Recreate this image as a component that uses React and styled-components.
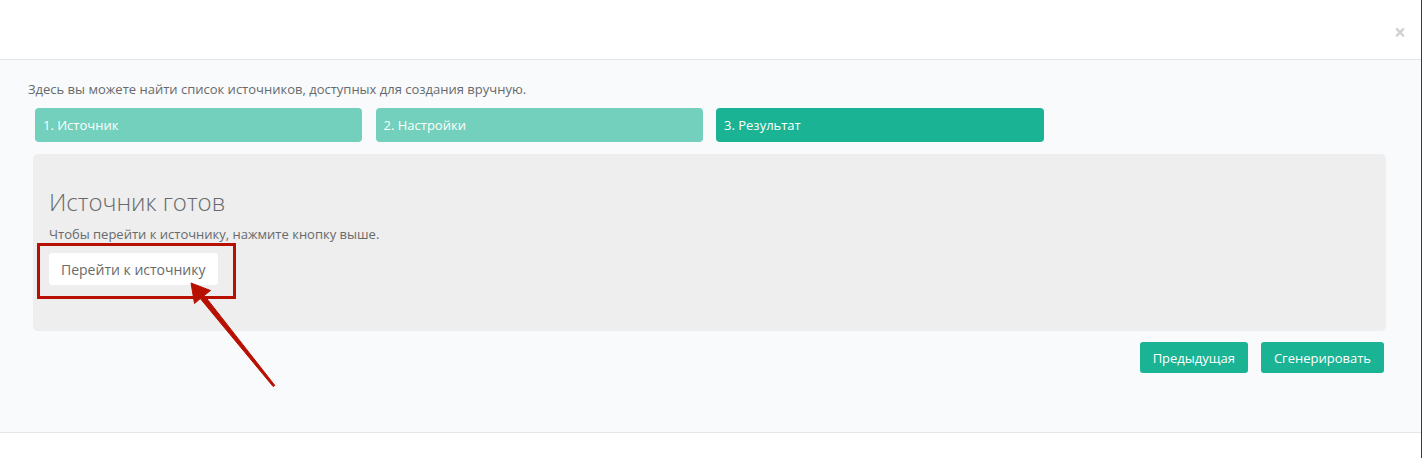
import React from 'react';
import styled, { createGlobalStyle } from 'styled-components';

const GlobalStyle = createGlobalStyle`
  body {
    margin: 0;
    background: #ffffff;
    font-family: "Open Sans", "Liberation Sans", sans-serif;
    color: #676a6c;
  }
`;

const Page = styled.div`
  display: flex;
  flex-direction: column;
  height: 458px;
  border-right: 1px solid #3c3c3c;
  box-sizing: border-box;
  overflow: hidden;
`;

const Header = styled.div`
  height: 60px;
  flex-shrink: 0;
  display: flex;
  justify-content: flex-end;
  align-items: center;
  padding: 6px 15px 0 0;
  box-sizing: border-box;
  background: #ffffff;
  border-bottom: 1px solid #e5e6e7;
`;

const Close = styled.button`
  border: none;
  background: none;
  padding: 0;
  font-family: "Open Sans", sans-serif;
  font-size: 21px;
  font-weight: 700;
  line-height: 1;
  color: rgba(0, 0, 0, 0.2);
  cursor: pointer;
`;

const Body = styled.div`
  flex: 1;
  background: #f8fafb;
  padding: 20px 0 0 28px;
`;

const Intro = styled.div`
  font-size: 13px;
  line-height: 18px;
`;

const Steps = styled.div`
  display: grid;
  grid-template-columns: 327px 327px 328px;
  column-gap: 13.5px;
  margin: 10px 0 0 7px;
`;

const Step = styled.div`
  height: 34px;
  display: flex;
  align-items: center;
  padding-left: 8px;
  border-radius: 4px;
  font-size: 13px;
  color: #ffffff;
  background: ${(p) => (p.$active ? '#1ab394' : '#72d0bc')};
`;

const Panel = styled.div`
  position: relative;
  width: 1353px;
  height: 177px;
  margin: 12px 0 0 5px;
  padding: 35px 16px 0;
  box-sizing: border-box;
  background: #eeeeee;
  border-radius: 5px;
`;

const Title = styled.h2`
  margin: 0 0 10px;
  font-size: 24px;
  font-weight: 300;
  line-height: 1.1;
  color: #676a6c;
`;

const Hint = styled.p`
  margin: 0 0 10px;
  font-size: 13px;
  line-height: 18px;
`;

const WhiteButton = styled.button`
  height: 32px;
  padding: 0 12px;
  border: none;
  border-radius: 3px;
  background: #ffffff;
  font-family: "Open Sans", sans-serif;
  font-size: 14px;
  color: #676a6c;
  cursor: pointer;
`;

const Highlight = styled.div`
  position: absolute;
  left: 4px;
  top: 89px;
  width: 199px;
  height: 56px;
  box-sizing: border-box;
  border: 3.5px solid #b81000;
  pointer-events: none;
`;

const Arrow = styled.svg`
  position: absolute;
  left: 0;
  top: 0;
  overflow: visible;
  pointer-events: none;
`;

const Actions = styled.div`
  display: flex;
  justify-content: flex-end;
  gap: 13px;
  width: 1351px;
  margin: 11px 0 0 5px;
`;

const GreenButton = styled.button`
  height: 31px;
  padding: 0 13px;
  border: none;
  border-radius: 3px;
  background: #1ab394;
  font-family: "Open Sans", sans-serif;
  font-size: 13px;
  color: #ffffff;
  cursor: pointer;
`;

const Footer = styled.div`
  height: 26px;
  flex-shrink: 0;
  background: #ffffff;
  border-top: 1px solid #e5e6e7;
  box-sizing: border-box;
`;

export default function App() {
  return (
    <>
      <GlobalStyle />
      <Page>
        <Header>
          <Close type="button">×</Close>
        </Header>
        <Body>
          <Intro>Здесь вы можете найти список источников, доступных для создания вручную.</Intro>
          <Steps>
            <Step>1. Источник</Step>
            <Step>2. Настройки</Step>
            <Step $active>3. Результат</Step>
          </Steps>
          <Panel>
            <Title>Источник готов</Title>
            <Hint>Чтобы перейти к источнику, нажмите кнопку выше.</Hint>
            <WhiteButton type="button">Перейти к источнику</WhiteButton>
            <Highlight />
            <Arrow width="300" height="260">
              <g transform="translate(-33 -154)">
                <polygon
                  points="191,283 210.5,290.5 204.3,295.4 274.8,385.4 273.2,386.6 200.3,298.6 194.5,303.5"
                  fill="#b81000"
                  stroke="#b81000"
                  strokeWidth="1"
                  strokeLinejoin="round"
                />
              </g>
            </Arrow>
          </Panel>
          <Actions>
            <GreenButton type="button">Предыдущая</GreenButton>
            <GreenButton type="button">Сгенерировать</GreenButton>
          </Actions>
        </Body>
        <Footer />
      </Page>
    </>
  );
}
